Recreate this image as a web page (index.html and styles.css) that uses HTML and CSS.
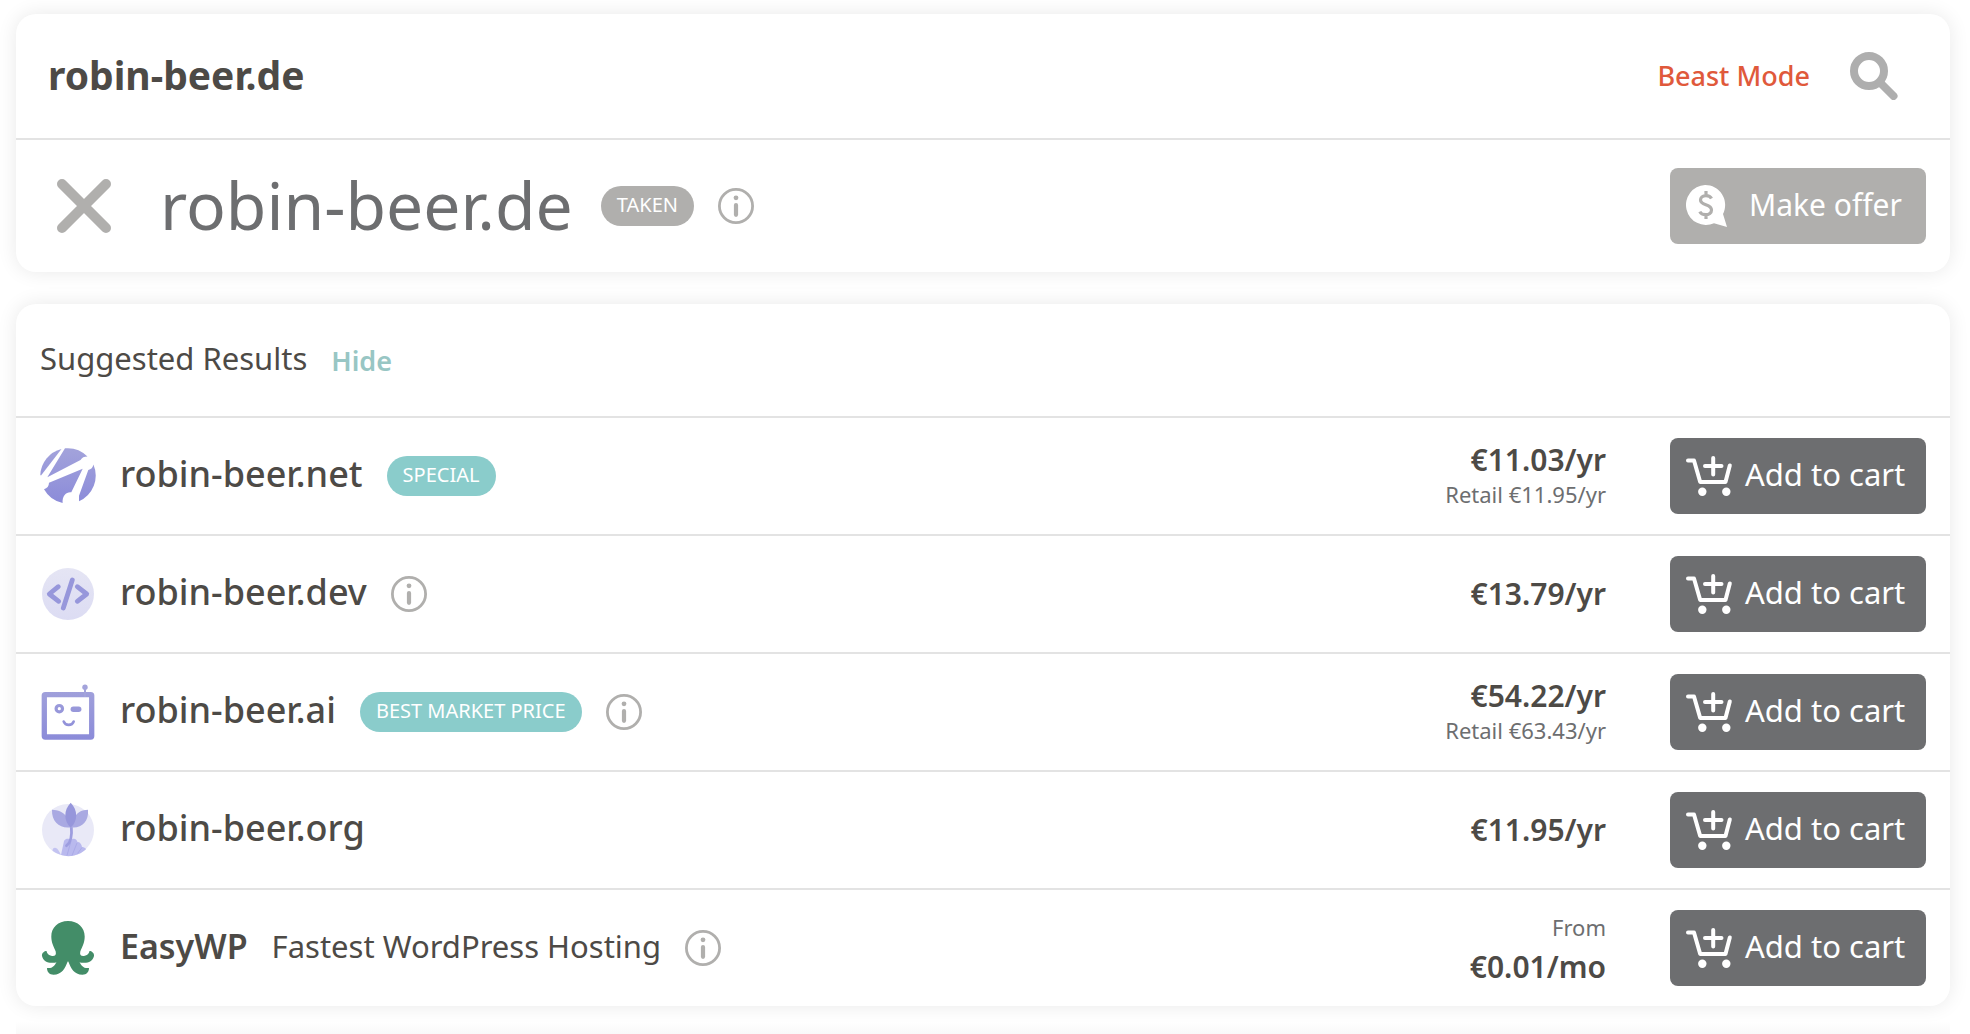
FILE: index.html
```html
<!DOCTYPE html>
<html lang="en">
<head>
  <meta charset="utf-8">
  <meta name="viewport" content="width=device-width, initial-scale=1">
  <title>robin-beer.de – Domain search</title>
  <link rel="stylesheet" href="styles.css">
</head>
<body>
  <svg class="defs" aria-hidden="true">
    <symbol id="info" viewBox="0 0 36 36">
      <circle cx="18" cy="18" r="16.6" fill="none" stroke="currentColor" stroke-width="2.8"/>
      <circle cx="18" cy="9.8" r="2.4" fill="currentColor"/>
      <path d="M18 17v9.8" stroke="currentColor" stroke-width="4.2" stroke-linecap="round"/>
    </symbol>
    <symbol id="cart" viewBox="0 0 48 44">
      <g fill="none" stroke="#fff" stroke-width="4" stroke-linecap="round" stroke-linejoin="round">
        <path d="M3 6.5H9L15.2 28H40.5L44.8 11.5"/>
        <path d="M28.2 4V20.500M20 12H36.500"/>
      </g>
      <circle cx="17.300" cy="37.700" r="4.200" fill="#fff"/>
      <circle cx="41.300" cy="37.700" r="4.200" fill="#fff"/>
    </symbol>
    <linearGradient id="violet" x1="0" y1="0" x2="0" y2="56" gradientUnits="userSpaceOnUse">
      <stop offset="0" stop-color="#a3a3db"/>
      <stop offset="1" stop-color="#8b8bd9"/>
    </linearGradient>
    <linearGradient id="mist" x1="0" y1="0" x2="0" y2="1">
      <stop offset="0" stop-color="#e5e5f4"/>
      <stop offset="1" stop-color="#dcdcf3"/>
    </linearGradient>
  </svg>

  <main class="page">
    <section class="card">
      <form class="search">
        <input class="search-input" type="text" value="robin-beer.de" aria-label="Domain name">
        <a class="beast" href="#">Beast Mode</a>
        <button class="search-button" type="button" aria-label="Search">
          <svg width="48" height="48" viewBox="0 0 48 48" fill="none" stroke="#aeaeae" stroke-width="8">
            <circle cx="19" cy="19" r="15"/>
            <path d="M30 30.500L43.500 44" stroke-linecap="round"/>
          </svg>
        </button>
      </form>
      <div class="row result">
        <svg class="icon" viewBox="0 0 56 56" aria-hidden="true">
          <path d="M6 6L50 50M50 6L6 50" stroke="#b0afad" stroke-width="10" stroke-linecap="round"/>
        </svg>
        <h1 class="domain">robin-beer.de</h1>
        <span class="badge muted">TAKEN</span>
        <button class="info" type="button" aria-label="More information"><svg><use href="#info"/></svg></button>
        <button class="action offer" type="button">
          <svg width="42" height="42" viewBox="0 0 42 42" aria-hidden="true">
            <path fill="#fff" d="M20 0a20 20 0 0 1 18 29L42 42L29 38.300A20 20 0 1 1 20 0Z"/>
            <path d="M26.500 13.500C25.500 11.500 23.500 10.600 21 10.600C17.500 10.600 15.500 12.500 15.500 15C15.500 21 26.500 18.500 26.500 25C26.500 28 24 29.700 20.700 29.700C18 29.700 15.800 28.700 14.800 26.600M21 6V10.500M21 30V34" fill="none" stroke="#b0afad" stroke-width="3.200"/>
          </svg>
          <span>Make offer</span>
        </button>
      </div>
    </section>

    <section class="card">
      <header class="card-head">
        <h2 class="heading">Suggested Results</h2>
        <a class="hide" href="#">Hide</a>
      </header>
      <ul class="list">
        <li class="row">
          <svg class="icon" viewBox="0 0 56 56" fill="url(#violet)" aria-hidden="true">
            <path d="M.3 27A28 28 0 0 1 21.500 .9L1 27.500Z"/>
            <path d="M25 .3A28 28 0 0 1 47.500 8.500C44 8.500 42 9.500 40.500 12L7.300 29.300Z"/>
            <path d="M4 41.300C7 40.500 9 38 9 34.800L42.700 20.700L31.300 44.300C27 43.500 22 47 22.600 55A28 28 0 0 1 4 41.300Z"/>
            <path d="M53.400 16.500A28 28 0 0 1 39 53.300L39 47.700L48.300 22C51 21.500 53 19.500 53.400 16.500Z"/>
          </svg>
          <h3 class="name">robin-beer.net</h3>
          <span class="badge">SPECIAL</span>
          <p class="price"><strong>€11.03/yr</strong><small>Retail €11.95/yr</small></p>
          <button class="action" type="button"><svg width="48" height="44" aria-hidden="true"><use href="#cart"/></svg><span>Add to cart</span></button>
        </li>
        <li class="row">
          <svg class="icon" viewBox="0 0 56 56" aria-hidden="true">
            <circle cx="28" cy="28" r="26" fill="url(#mist)"/>
            <path d="M18.300 20.700L9.300 28L18.700 35.300M37.300 20.700L46.700 28L37.300 35.300M32.300 14L23.300 42" fill="none" stroke="#9797db" stroke-width="4.800" stroke-linecap="round" stroke-linejoin="round"/>
          </svg>
          <h3 class="name">robin-beer.dev</h3>
          <button class="info" type="button" aria-label="More information"><svg><use href="#info"/></svg></button>
          <p class="price"><strong>€13.79/yr</strong></p>
          <button class="action" type="button"><svg width="48" height="44" aria-hidden="true"><use href="#cart"/></svg><span>Add to cart</span></button>
        </li>
        <li class="row">
          <svg class="icon" viewBox="0 0 56 56" fill="none" stroke="url(#violet)" aria-hidden="true">
            <rect x="4.300" y="10.600" width="47.400" height="42.400" rx="1" stroke-width="5.300"/>
            <circle cx="45" cy="3.200" r="2.700" fill="#a3a3db" stroke="none"/>
            <path d="M44 3H46V13H44Z" fill="#a3a3db" stroke="none"/>
            <circle cx="19.300" cy="24.700" r="3.200" stroke-width="3.200"/>
            <path d="M33.300 22.500H38.700A2.700 2.700 0 0 1 38.700 27.900H33.300A2.700 2.700 0 0 1 33.300 22.500Z" fill="url(#violet)" stroke="none"/>
            <path d="M23.700 37.500C25.500 42 32 42 33.700 37.500" stroke-width="2.600" stroke-linecap="round"/>
          </svg>
          <h3 class="name">robin-beer.ai</h3>
          <span class="badge">BEST MARKET PRICE</span>
          <button class="info" type="button" aria-label="More information"><svg><use href="#info"/></svg></button>
          <p class="price"><strong>€54.22/yr</strong><small>Retail €63.43/yr</small></p>
          <button class="action" type="button"><svg width="48" height="44" aria-hidden="true"><use href="#cart"/></svg><span>Add to cart</span></button>
        </li>
        <li class="row">
          <svg class="icon" viewBox="0 0 56 56" aria-hidden="true">
            <circle cx="28" cy="28" r="26" fill="#e9e9f7"/>
            <path d="M12.500 48.800C12.500 44.500 17 44.500 19.500 50L21 53.100A26 26 0 0 1 12.500 48.800Z" fill="#c3c3f1"/>
            <path d="M21 53.100L24 39C26 35.500 30 37 31 38C34 35 37 37.500 37.500 40C40 40 41.500 42 42 45C44 45 45.500 46 46 47.200A26 26 0 0 1 21 53.100Z" fill="#b9b9ee"/>
            <path d="M27 53.500L31 39M32 53.500L37 41M37.500 51.500L42 45.500" stroke="#aaaae8" fill="none"/>
            <path d="M31.300 24.500C32 32 32 40 26.500 43.700" fill="none" stroke="#9d9ddf" stroke-width="2.800" stroke-linecap="round"/>
            <path d="M12 7.700C18 8 23.500 10 26 14L31 25.300C20 27 11.500 20 12 7.700ZM48 7.700C42 8 37.500 10 35.500 14L30.500 25.300C41 27 49 20 48 7.700Z" fill="#a9a9e2"/>
            <path d="M30.700 .7C38 8 38 19 30.700 25.500C23.500 19 23.500 8 30.700 .7Z" fill="#9696db"/>
          </svg>
          <h3 class="name">robin-beer.org</h3>
          <p class="price"><strong>€11.95/yr</strong></p>
          <button class="action" type="button"><svg width="48" height="44" aria-hidden="true"><use href="#cart"/></svg><span>Add to cart</span></button>
        </li>
        <li class="row">
          <svg class="icon" viewBox="0 0 56 56" aria-hidden="true">
            <path fill="#438d68" d="M28 1C38 1 44.700 7.500 44.700 16.500C44.700 23 42 27 40.300 31.500C39.500 35 41 36.300 44 36C47.500 35.500 49 33.500 49.500 31C51.500 31 54.500 33 54 36C53 41 48 43.300 43 42.800C41.500 42.700 40.500 42.500 39.500 42.200C41.500 45.500 43.500 48.800 49 48C49 52 46.500 54.700 42.500 54.700C34 54.700 31 48.500 28.300 41.500H27.700C25 48.500 22 54.700 13.500 54.700C9.500 54.700 7 52 7 48C12.500 48.800 14.500 45.500 16.500 42.200C15.500 42.500 14.500 42.700 13 42.800C8 43.300 3 41 2 36C1.500 33 4.500 31 6.500 31C7 33.500 8.500 35.500 12 36C15 36.300 16.500 35 15.700 31.500C14 27 11.300 23 11.300 16.500C11.300 7.500 18 1 28 1Z"/>
          </svg>
          <h3 class="name strong">EasyWP</h3>
          <span class="tagline">Fastest WordPress Hosting</span>
          <button class="info" type="button" aria-label="More information"><svg><use href="#info"/></svg></button>
          <p class="price spaced"><small>From</small><strong>€0.01/mo</strong></p>
          <button class="action" type="button"><svg width="48" height="44" aria-hidden="true"><use href="#cart"/></svg><span>Add to cart</span></button>
        </li>
      </ul>
    </section>
    <div class="page-end"></div>
  </main>
</body>
</html>
```
FILE: styles.css
```css
* {
  box-sizing: border-box;
}

body {
  margin: 0;
  background: #fff;
  color: #4d4a46;
  font-family: "Noto Sans", "Open Sans", sans-serif;
  font-size: 31px;
}

h1, h2, h3, p, ul {
  margin: 0;
  padding: 0;
  font-weight: 400;
}

a {
  text-decoration: none;
}

button {
  border: 0;
  padding: 0;
  background: none;
  font: inherit;
  cursor: pointer;
}

svg {
  display: block;
  flex: none;
}

.defs {
  position: absolute;
  width: 0;
  height: 0;
}

.page {
  padding: 14px 20px 0 16px;
}

.card {
  margin-bottom: 32px;
  border-radius: 20px;
  background: #fff;
  box-shadow: 0 0 20px rgba(0, 0, 0, 0.09);
}

.card:last-of-type {
  margin-bottom: 16px;
}

.page-end {
  height: 12px;
  background: linear-gradient(#fff, #f9f9f9);
}

/* Search bar */

.search {
  display: flex;
  align-items: center;
  height: 124px;
  padding: 0 52px 0 32px;
}

.search-input {
  flex: 1;
  min-width: 0;
  border: 0;
  padding: 0 0 4px;
  background: none;
  color: inherit;
  font: 700 39px "Noto Sans", "Open Sans", sans-serif;
  outline: 0;
}

.beast {
  margin-right: 40px;
  padding-bottom: 2px;
  color: #e0593b;
  font-size: 27px;
  font-weight: 500;
}

/* Rows */

.card-head {
  display: flex;
  align-items: center;
  gap: 24px;
  height: 112px;
  padding: 0 24px;
}

.heading {
  padding-bottom: 4px;
  font-size: 31px;
}

.hide {
  color: #98c6c4;
  font-size: 27px;
  font-weight: 600;
}

.list {
  list-style: none;
}

.row {
  display: flex;
  align-items: center;
  gap: 24px;
  height: 118px;
  padding: 0 24px;
  border-top: 2px solid #e3e3e3;
}

.result {
  height: 134px;
  padding-left: 40px;
}

.icon {
  width: 56px;
  height: 56px;
}

.domain {
  padding: 0 4px 4px 24px;
  color: #6d6e70;
  font-size: 66px;
  line-height: 72px;
}

.name {
  padding-bottom: 4px;
  font-size: 36px;
  font-weight: 500;
  line-height: 48px;
}

.strong {
  font-size: 34px;
  font-weight: 600;
}

.tagline {
  padding-bottom: 4px;
}

.badge {
  height: 40px;
  padding: 0 16px;
  border-radius: 20px;
  background: #8acccb;
  color: #fff;
  font-size: 20px;
  line-height: 38px;
}

.muted {
  background: #b0afad;
}

.info {
  color: #b0afad;
}

.info svg {
  width: 36px;
  height: 36px;
}

.price {
  display: flex;
  flex-direction: column;
  margin-left: auto;
  text-align: right;
}

.spaced {
  gap: 6px;
}

.price strong {
  font-size: 30px;
  font-weight: 600;
  line-height: 36px;
}

.price small {
  color: #6d6e70;
  font-size: 22px;
  line-height: 32px;
}

.action {
  display: flex;
  align-items: center;
  gap: 12px;
  width: 256px;
  height: 76px;
  margin-left: 40px;
  padding-left: 15px;
  border-radius: 8px;
  background: #6d6e70;
  color: #fff;
  font-size: 31px;
}

.action span {
  padding-bottom: 4px;
}

.offer {
  gap: 22px;
  margin-left: auto;
  background: #b0afad;
  font-size: 30px;
}
```
